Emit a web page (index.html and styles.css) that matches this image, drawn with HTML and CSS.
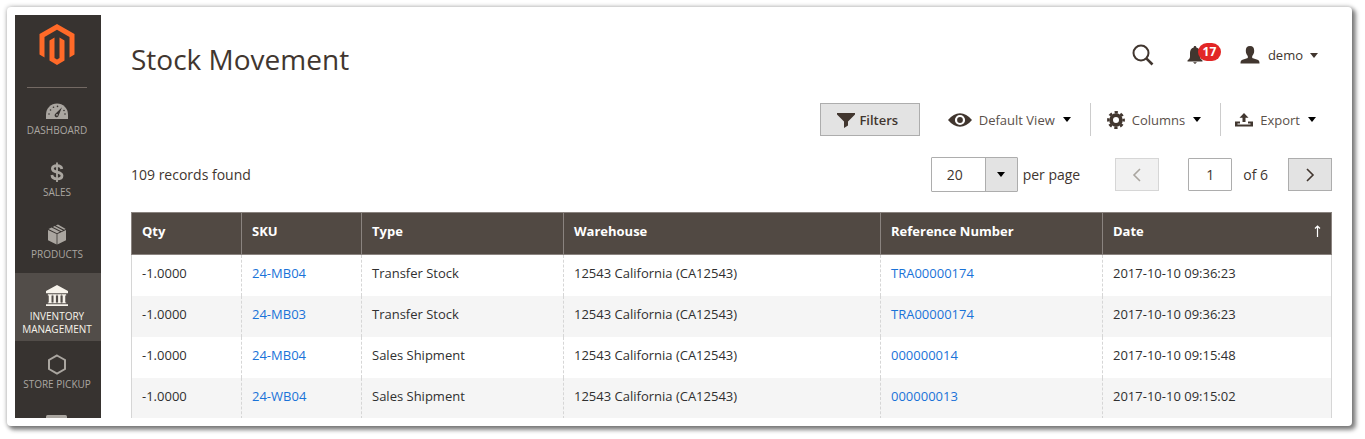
FILE: index.html
```html
<!DOCTYPE html>
<html lang="en">
<head>
<meta charset="utf-8">
<title>Stock Movement</title>
<link rel="stylesheet" href="styles.css">
</head>
<body>
<div class="frame">
<div class="app">
  <nav class="sidebar">
    <a class="logo" href="#"><svg width="36" height="41" viewBox="0 0 36 41"><path fill="#ff6a28" d="M18 0 35.500 10V30.500L30.500 33.500V13L18 5.800 5.500 13V33.500L.5 30.500V10zM15.500 13.500V34L18 35.500 20.500 34V13.500L25.500 16.500V36.500L18 41 10.500 36.500V16.500z"/></svg></a>
    <a class="nav-item" href="#"><svg width="24" height="22" viewBox="0 0 24 22"><path fill="currentColor" d="M1 20V15.500a11 11 0 0 1 22 0V20z"/><g fill="#373330"><circle cx="4" cy="15" r=".8"/><circle cx="5.500" cy="11" r=".8"/><circle cx="8.500" cy="8.300" r=".8"/><circle cx="12.500" cy="7.400" r=".8"/><circle cx="20" cy="15" r=".8"/><circle cx="19" cy="11.500" r=".8"/><path d="M17 8.200 13.600 16.500a2 2 0 1 1-3-2z"/></g><circle cx="12" cy="15.800" r=".9" fill="currentColor"/></svg><span>DASHBOARD</span></a>
    <a class="nav-item" href="#"><svg width="24" height="22" viewBox="0 0 24 22"><path fill="none" stroke="currentColor" stroke-width="2.800" d="M16.800 8C16.500 5.500 14.800 4.600 12 4.600 9.200 4.600 7.400 5.700 7.400 7.700 7.400 12.400 17 9.800 17 14.700 17 16.800 15 17.900 12 17.900 8.800 17.900 7.200 16.700 6.900 14"/><path stroke="currentColor" stroke-width="1.800" d="M12 1.500V21"/></svg><span>SALES</span></a>
    <a class="nav-item" href="#"><svg width="24" height="22" viewBox="0 0 24 22"><path fill="currentColor" d="M3 7 11.600 11V21.500L3 17.300zM21 7 12.400 11V21.500L21 17.300zM3.500 6 6.600 4.500 15 8.800 12 10.200zM7.900 3.900 9.600 3.100 18 7.400 16.300 8.200zM10.800 2.500 13 1.500 20.700 5.900 19.200 6.800z"/></svg><span>PRODUCTS</span></a>
    <a class="nav-item active" href="#"><svg width="26" height="24" viewBox="0 0 26 24"><path fill="currentColor" d="M13 0 25 6.500V9H1V6.500zM3 10h5v1.500H7V19h1v1H3v-1h1v-7.500H3zM8.200 10h4.600v1.500h-1V19h1v1H8.200v-1h1v-7.500h-1zM13.200 10h4.600v1.500h-1V19h1v1h-4.600v-1h1v-7.500h-1zM18.200 10h4.800v1.500h-1V19h1v1h-4.800v-1h1v-7.500h-1zM1 21h24v2H1z"/></svg><span>INVENTORY<br>MANAGEMENT</span></a>
    <a class="nav-item" href="#"><svg width="24" height="22" viewBox="0 0 24 22"><path fill="none" stroke="currentColor" stroke-width="2" d="M12 2.500 20 7V16L12 20.500 4 16V7z"/></svg><span>STORE PICKUP</span></a>
    <a class="nav-item" href="#"><svg width="24" height="22" viewBox="0 0 24 22"><rect x="1" width="21" height="18" rx="1.500" fill="currentColor"/></svg></a>
  </nav>
  <main class="main">
    <header class="header">
      <h1>Stock Movement</h1>
      <div class="header-tools">
        <button class="plain" type="button" aria-label="Search"><svg width="22" height="22" viewBox="0 0 22 22"><circle cx="9" cy="9" r="7.500" fill="none" stroke="currentColor" stroke-width="2"/><path stroke="currentColor" stroke-width="2.600" d="m14.300 14.300 6.200 6.200"/></svg></button>
        <button class="plain bell" type="button" aria-label="Notifications"><svg width="16" height="18" viewBox="0 0 16 18"><path fill="currentColor" d="M8 0c1 0 1.300.6 1.300 1.400C12 2.200 13 4.300 13 7v3.500c0 1.800 1 2.800 2.500 4V15.500H.5v-1C2 13.300 3 12.300 3 10.500V7c0-2.700 1-4.800 3.700-5.600C6.700.6 7 0 8 0zM6 16.300h4L8 18z"/></svg><span class="badge">17</span></button>
        <button class="plain user" type="button"><svg width="20" height="18" viewBox="0 0 20 18"><path fill="currentColor" d="M10 0c3 0 4.200 1.900 4.200 4.700 0 2.300-.9 4.200-2 5.400V12l5.300 1.800C19 14.300 19.500 15.500 19.500 17.500H.5c0-2 .5-3.200 2-3.700L7.800 12v-1.900c-1.100-1.200-2-3.100-2-5.400C5.800 1.900 7 0 10 0z"/></svg><span>demo</span><i class="caret"></i></button>
      </div>
    </header>
    <div class="toolbar">
      <button class="filters" type="button"><svg width="18" height="16" viewBox="0 0 18 16"><path fill="currentColor" d="M0 1h18v1.500L11 9.500V13.500L7 16V9.500L0 2.500z"/></svg><span>Filters</span></button>
      <button class="plain tool view" type="button"><svg width="24" height="14" viewBox="0 0 24 14"><path fill="currentColor" fill-rule="evenodd" d="M0 7C4 2.500 7.500.3 12 .3S20 2.500 24 7c-4 4.500-7.500 6.700-12 6.700S4 11.500 0 7zM12 1.900a5.100 5.100 0 1 0 0 10.200 5.100 5.100 0 0 0 0-10.200z"/><circle cx="12" cy="7" r="2.900" fill="currentColor"/></svg><span>Default View</span><i class="caret"></i></button>
      <button class="plain tool columns" type="button"><svg width="18" height="18" viewBox="0 0 18 18"><circle cx="9" cy="9" r="4.900" fill="none" stroke="currentColor" stroke-width="3.800"/><circle cx="9" cy="9" r="7.700" fill="none" stroke="currentColor" stroke-width="2.400" stroke-dasharray="3.300 2.747" stroke-dashoffset="1.650"/></svg><span>Columns</span><i class="caret"></i></button>
      <button class="plain tool" type="button"><svg width="18" height="14" viewBox="0 0 18 14"><path fill="currentColor" d="M9 0 13.500 4.700H10.500V9h-3V4.700H4.500zM0 8.500h5V10.500H2.500v1h13v-1H13V8.500h5V13.500H0z"/></svg><span>Export</span><i class="caret"></i></button>
    </div>
    <div class="paging">
      <div class="count">109 records found</div>
      <label class="size"><span class="select"><select><option>20</option></select><span class="drop"><i class="caret"></i></span></span>per page</label>
      <div class="pager">
        <button class="step" type="button" disabled aria-label="Previous"><svg width="10" height="14" viewBox="0 0 10 14"><path fill="none" stroke="currentColor" stroke-width="1.600" d="M8 1 2 7l6 6"/></svg></button>
        <label class="page"><input type="text" value="1"><span>of 6</span></label>
        <button class="step" type="button" aria-label="Next"><svg width="10" height="14" viewBox="0 0 10 14"><path fill="none" stroke="currentColor" stroke-width="1.600" d="M2 1 8 7l-6 6"/></svg></button>
      </div>
    </div>
    <table class="grid">
      <colgroup><col class="c-qty"><col class="c-sku"><col class="c-type"><col><col class="c-ref"><col class="c-date"></colgroup>
      <thead><tr><th>Qty</th><th>SKU</th><th>Type</th><th>Warehouse</th><th>Reference Number</th><th><span class="sorted">Date<svg width="7" height="12" viewBox="0 0 7 12"><path fill="none" stroke="currentColor" stroke-width="1.200" d="M3.500 12V1M1 3.500 3.500 1 6 3.500"/></svg></span></th></tr></thead>
      <tbody>
        <tr><td>-1.0000</td><td><a href="#">24-MB04</a></td><td>Transfer Stock</td><td>12543 California (CA12543)</td><td><a href="#">TRA00000174</a></td><td>2017-10-10 09:36:23</td></tr>
        <tr><td>-1.0000</td><td><a href="#">24-MB03</a></td><td>Transfer Stock</td><td>12543 California (CA12543)</td><td><a href="#">TRA00000174</a></td><td>2017-10-10 09:36:23</td></tr>
        <tr><td>-1.0000</td><td><a href="#">24-MB04</a></td><td>Sales Shipment</td><td>12543 California (CA12543)</td><td><a href="#">000000014</a></td><td>2017-10-10 09:15:48</td></tr>
        <tr><td>-1.0000</td><td><a href="#">24-WB04</a></td><td>Sales Shipment</td><td>12543 California (CA12543)</td><td><a href="#">000000013</a></td><td>2017-10-10 09:15:02</td></tr>
      </tbody>
    </table>
  </main>
</div>
</div>
</body>
</html>
```
FILE: styles.css
```css
* { box-sizing: border-box; }
body {
  margin: 0;
  padding: 7px 13px 12px 7px;
  background: #fff;
  color: #41362f;
  font: 13px/18px "Open Sans", "Noto Sans", sans-serif;
}
svg { display: block; flex: none; }
button, input, select { font: inherit; color: inherit; margin: 0; }
a { text-decoration: none; }

.frame {
  padding: 8px;
  border-radius: 4px;
  background: #fff;
  box-shadow: 0 0 4px 1px rgba(0, 0, 0, .2), 3px 3px 4px 1px rgba(0, 0, 0, .45);
}
.app {
  display: flex;
  height: calc(100vh - 36px);
  overflow: hidden;
}

.sidebar {
  flex: none;
  width: 86px;
  background: #373330;
  overflow: hidden;
}
.logo {
  display: flex;
  justify-content: center;
  height: 64px;
  margin: 9px 14px 0 12px;
  border-bottom: 1px solid #736963;
}
.nav-item {
  display: flex;
  flex-direction: column;
  align-items: center;
  gap: 3px;
  min-height: 62px;
  padding: 12px 2px 5px 0;
  color: #aaa6a0;
  font-size: 10px;
  line-height: 13px;
  text-align: center;
}
.logo + .nav-item { min-height: 61px; padding-top: 11px; }
.nav-item svg { height: 22px; }
.nav-item.active { background: #524d49; color: #f7f3eb; }

.main {
  flex: 1;
  min-width: 0;
  padding: 0 12px 0 30px;
}
.header {
  display: flex;
  justify-content: space-between;
  align-items: flex-start;
  padding-top: 24px;
}
h1 { margin: 0; font-size: 28px; line-height: 40px; font-weight: 400; }
.header-tools {
  display: flex;
  align-items: center;
  padding: 5px 14px 0 0;
}
.plain {
  display: flex;
  align-items: center;
  padding: 0;
  border: 0;
  background: none;
}
.caret {
  width: 0;
  border: 4px solid transparent;
  border-top: 5px solid currentColor;
  border-bottom: 0;
}
.bell { position: relative; margin-left: 33px; }
.badge {
  position: absolute;
  left: 11px;
  top: -3px;
  width: 23px;
  border-radius: 9px;
  background: #e22626;
  color: #fff;
  font-size: 12px;
  font-weight: 700;
}
.user { margin-left: 37px; }
.user span { margin: 0 7px 0 8px; }

.toolbar {
  display: flex;
  justify-content: flex-end;
  margin-top: 24px;
  padding-right: 16px;
}
.filters {
  display: flex;
  align-items: center;
  justify-content: center;
  gap: 4px;
  width: 100px;
  height: 33px;
  margin-right: 28px;
  padding: 0 4px 0 0;
  border: 1px solid #adadad;
  background: #e3e3e3;
  font-weight: 600;
}
.tool { height: 33px; gap: 7px; }
.tool span { color: #5a504a; }
.tool .caret { margin-left: 1px; color: #000; }
.view { margin-right: 19px; }
.columns {
  margin-right: 14px;
  padding: 0 19px 0 16px;
  border: 1px solid #ccc;
  border-width: 0 1px;
}

.paging {
  display: flex;
  align-items: center;
  margin-top: 21px;
  font-size: 14px;
}
.count { flex: 1; }
.size { display: flex; align-items: center; gap: 5px; }
.select {
  display: grid;
  grid-template-columns: 1fr 32px;
  width: 87px;
  height: 35px;
  border: 1px solid #adadad;
  border-radius: 1px;
}
.select select {
  grid-area: 1 / 1 / 2 / 3;
  appearance: none;
  padding: 0 15px;
  border: 0;
  background: none;
}
.drop {
  grid-area: 1 / 2;
  display: flex;
  align-items: center;
  justify-content: center;
  border-left: 1px solid #adadad;
  background: #e3e3e3;
  color: #000;
  pointer-events: none;
}
.pager { display: flex; margin-left: 35px; }
.step {
  display: flex;
  align-items: center;
  justify-content: center;
  width: 44px;
  height: 33px;
  padding: 0;
  border: 1px solid #adadad;
  background: #e3e3e3;
}
.step:disabled { border-color: #d6d6d6; background: #f1f1f1; color: #aaa6a0; }
.page { display: flex; align-items: center; gap: 11px; margin: 0 20px 0 29px; }
.page input {
  width: 44px;
  height: 33px;
  padding: 0;
  border: 1px solid #adadad;
  border-radius: 1px;
  text-align: center;
}

.grid {
  width: 100%;
  margin-top: 20px;
  border-collapse: collapse;
  table-layout: fixed;
}
.c-qty { width: 110px; }
.c-sku { width: 120px; }
.c-type { width: 202px; }
.c-ref { width: 222px; }
.c-date { width: 229px; }
.grid th {
  height: 42px;
  padding: 0 10px 6px;
  border: 1px solid #8a837f;
  background: #514943;
  color: #fff;
  font-weight: 700;
  text-align: left;
}
.grid td {
  height: 41px;
  padding: 0 10px 4px;
  border: 0 dashed #d6d6d6;
  border-left-width: 1px;
  color: #303030;
}
.grid td:first-child { border-left-style: solid; }
.grid td:last-child { border-right: 1px solid #d6d6d6; }
.grid tbody tr:nth-child(even) { background: #f5f5f5; }
.grid td a { color: #1a73d8; }
.sorted { display: flex; justify-content: space-between; align-items: center; }
```
